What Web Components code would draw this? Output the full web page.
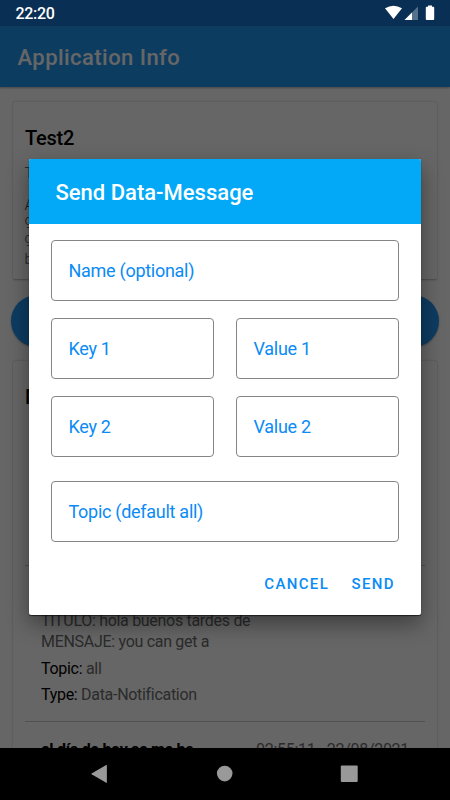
<!DOCTYPE html>
<html lang="en">
<head>
<meta charset="utf-8">
<title>Application Info</title>
<style>
body {
  margin: 0;
  font-family: Roboto, "Liberation Sans", sans-serif;
  --color-primary: #2196f3;
  --color-accent: #0a8bf5;
  --color-muted: #6c6c6c;
}
</style>
</head>
<body>
<phone-screen>
  <status-bar slot="status" time="22:20"></status-bar>
  <app-bar>Application Info</app-bar>
  <info-card class="details" heading="Test2">
    <text-line style="--top: 13px">T</text-line>
    <text-line style="--top: 14px">A</text-line>
    <text-line>9</text-line>
    <text-line>9</text-line>
    <text-line>b</text-line>
  </info-card>
  <pill-button></pill-button>
  <info-card class="messages" heading="M">
    <message-item>
      <span slot="body">TITULO: hola buenos tardes de<br>MENSAJE: you can get a</span>
      <span slot="topic">all</span>
      <span slot="type">Data-Notification</span>
    </message-item>
    <message-head date="02:55:11 - 22/08/2021">el día de hoy se me ha</message-head>
  </info-card>
  <modal-dialog slot="dialog" heading="Send Data-Message">
    <outline-field class="wide">Name (optional)</outline-field>
    <outline-field>Key 1</outline-field>
    <outline-field>Value 1</outline-field>
    <outline-field>Key 2</outline-field>
    <outline-field>Value 2</outline-field>
    <outline-field class="wide last">Topic (default all)</outline-field>
    <flat-button slot="actions">CANCEL</flat-button>
    <flat-button slot="actions">SEND</flat-button>
  </modal-dialog>
  <nav-bar slot="nav"></nav-bar>
</phone-screen>

<script>
class BaseElement extends HTMLElement {

  constructor() {
    super();
    this.attachShadow({ mode: 'open' });
    const template = document.createElement('template');
    template.innerHTML = this.constructor.markup;
    this.shadowRoot.appendChild(template.content.cloneNode(true));
  }

  connectedCallback() {
    // fill in every [data-attr] from the attribute of that name
    this.shadowRoot.querySelectorAll('[data-attr]').forEach(el => {
      el.textContent = this.getAttribute(el.dataset.attr);
    });
  }

}

class PhoneScreen extends BaseElement {
  static markup = `
<style>
:host {
  display: grid;
  grid-template-rows: 26px 722px 52px;
  width: 450px;
  height: 800px;
  position: relative;
  overflow: hidden;
}
.content {
  background: #fff;
  overflow: hidden;
  position: relative;
}
.scrim {
  position: absolute;
  inset: 0;
  background: rgba(0, 0, 0, 0.6);
}
</style>
<slot name="status"></slot>
<div class="content"><slot></slot><div class="scrim"></div></div>
<slot name="nav"></slot>
<slot name="dialog"></slot>
`;
}

class StatusBar extends BaseElement {
  static markup = `
<style>
:host {
  display: flex;
  justify-content: space-between;
  background: #0a2f54;
  color: #fff;
}
.time {
  margin-left: 15.5px;
  font-size: 16px;
  font-weight: 500;
  line-height: 28px;
  letter-spacing: -0.3px;
}
svg {
  width: 66px;
  height: 26px;
}
</style>
<span class="time" data-attr="time"></span>
<svg viewBox="384 0 66 26">
  <path d="M385 8.2Q393.5 3.2 402 8.2L393.5 19Z" fill="#fff"/>
  <path d="M418 6.5V20H404.5Z" fill="#56718c"/>
  <path d="M412 12.5V20H404.5Z" fill="#fff"/>
  <path d="M428 5.5h4v1.3h1.3q.9 0 .9.9v11.4q0 .9-.9.9h-6.6q-.9 0-.9-.9V7.7q0-.9.9-.9h1.3z" fill="#fff"/>
</svg>
`;
}

class AppBar extends BaseElement {
  static markup = `
<style>
:host {
  display: block;
  height: 61px;
  padding-left: 17.5px;
  background: var(--color-primary);
  color: #fff;
  font-size: 22px;
  font-weight: 500;
  line-height: 64px;
  letter-spacing: 0.45px;
  box-shadow: 0 1px 2px rgba(0, 0, 0, 0.3);
}
</style>
<slot></slot>
`;
}

class InfoCard extends BaseElement {
  static markup = `
<style>
:host {
  display: block;
  box-sizing: border-box;
  margin: 15px 13px 0;
  height: 177px;
  padding: 0 12px;
  border-radius: 2px;
  background: #fff;
  box-shadow: 0 0.5px 2px rgba(0, 0, 0, 0.3);
}
:host(.messages) {
  margin-top: 14px;
  height: 420px;
}
h2 {
  margin: 0;
  padding-top: 24px;
  font-size: 20px;
  font-weight: 500;
  line-height: 25px;
  letter-spacing: -0.25px;
}
</style>
<h2 data-attr="heading"></h2>
<slot></slot>
`;
}

class TextLine extends BaseElement {
  static markup = `
<style>
:host {
  display: block;
  margin: var(--top, 0px) 0 0 -0.5px;
  font-size: 15px;
  font-weight: 300;
  line-height: 18px;
  color: #444;
}
</style>
<slot></slot>
`;
}

class PillButton extends BaseElement {
  static markup = `
<style>
:host {
  display: block;
  margin: 16px 11px 0;
  height: 52px;
  border-radius: 26px;
  background: var(--color-primary);
  box-shadow: 0 1px 2px rgba(0, 0, 0, 0.3);
}
</style>
`;
}

class MessageItem extends BaseElement {
  static markup = `
<style>
:host {
  display: block;
  box-sizing: border-box;
  margin-top: 155px;
  height: 157px;
  padding: 44px 16px 0;
  border-top: 1px solid #cacaca;
  border-bottom: 1px solid #cacaca;
  font-size: 16px;
  line-height: 21px;
  letter-spacing: -0.3px;
  color: var(--color-muted);
}
.row {
  margin-top: 6px;
}
.row + .row {
  margin-top: 5px;
}
b {
  font-weight: 400;
  color: #000;
}
</style>
<slot name="body"></slot>
<div class="row"><b>Topic:</b> <slot name="topic"></slot></div>
<div class="row"><b>Type:</b> <slot name="type"></slot></div>
`;
}

class MessageHead extends BaseElement {
  static markup = `
<style>
:host {
  display: flex;
  justify-content: space-between;
  padding: 17px 16px 0;
  font-size: 16px;
  line-height: 22px;
  letter-spacing: -0.3px;
}
b {
  font-weight: 700;
}
.date {
  color: var(--color-muted);
}
</style>
<b><slot></slot></b>
<span class="date" data-attr="date"></span>
`;
}

class ModalDialog extends BaseElement {
  static markup = `
<style>
:host {
  display: block;
  position: absolute;
  left: 29px;
  top: 159px;
  width: 392px;
  height: 455.5px;
  border-radius: 2px;
  background: #fff;
  box-shadow: 0 1px 1px rgba(0, 0, 0, 0.6), 0 9px 22px rgba(0, 0, 0, 0.4);
}
header {
  height: 64.5px;
  padding-left: 26.5px;
  border-radius: 2px 2px 0 0;
  background: #03a9f7;
  color: #fff;
  font-size: 22px;
  font-weight: 500;
  line-height: 67px;
}
.fields {
  display: grid;
  grid-template-columns: 1fr 1fr;
  gap: 17px 22px;
  padding: 16.9px 22px 0;
}
.actions {
  display: flex;
  justify-content: flex-end;
  gap: 22.5px;
  padding: 31px 26px 0 0;
}
</style>
<header data-attr="heading"></header>
<div class="fields"><slot></slot></div>
<div class="actions"><slot name="actions"></slot></div>
`;
}

class OutlineField extends BaseElement {
  static markup = `
<style>
:host {
  display: block;
  box-sizing: border-box;
  height: 61px;
  padding-left: 16.5px;
  border: 1px solid #858585;
  border-radius: 4px;
  color: var(--color-accent);
  font-size: 18px;
  line-height: 60px;
  letter-spacing: -0.28px;
}
:host(.wide) {
  grid-column: 1 / -1;
}
:host(.last) {
  margin-top: 6.5px;
}
</style>
<slot></slot>
`;
}

class FlatButton extends BaseElement {
  static markup = `
<style>
:host {
  display: block;
  color: var(--color-accent);
  font-size: 15px;
  font-weight: 500;
  line-height: 22px;
  letter-spacing: 1.35px;
}
</style>
<slot></slot>
`;
}

class NavBar extends BaseElement {
  static markup = `
<style>
:host {
  display: block;
  background: #000;
}
svg {
  display: block;
}
</style>
<svg width="450" height="52" viewBox="0 748 450 52" fill="#999">
  <path d="M106.9 765.5V782.5Q106.9 783.2 106.2 782.8L91.6 774.3Q91 773.9 91.6 773.5L106.2 765Q106.9 764.7 106.9 765.5Z"/>
  <circle cx="224.7" cy="773.6" r="7.8"/>
  <rect x="340.8" y="765.4" width="16.9" height="16.6" rx="1"/>
</svg>
`;
}

window.customElements.define('phone-screen', PhoneScreen);
window.customElements.define('status-bar', StatusBar);
window.customElements.define('app-bar', AppBar);
window.customElements.define('info-card', InfoCard);
window.customElements.define('text-line', TextLine);
window.customElements.define('pill-button', PillButton);
window.customElements.define('message-item', MessageItem);
window.customElements.define('message-head', MessageHead);
window.customElements.define('modal-dialog', ModalDialog);
window.customElements.define('outline-field', OutlineField);
window.customElements.define('flat-button', FlatButton);
window.customElements.define('nav-bar', NavBar);
</script>
</body>
</html>
